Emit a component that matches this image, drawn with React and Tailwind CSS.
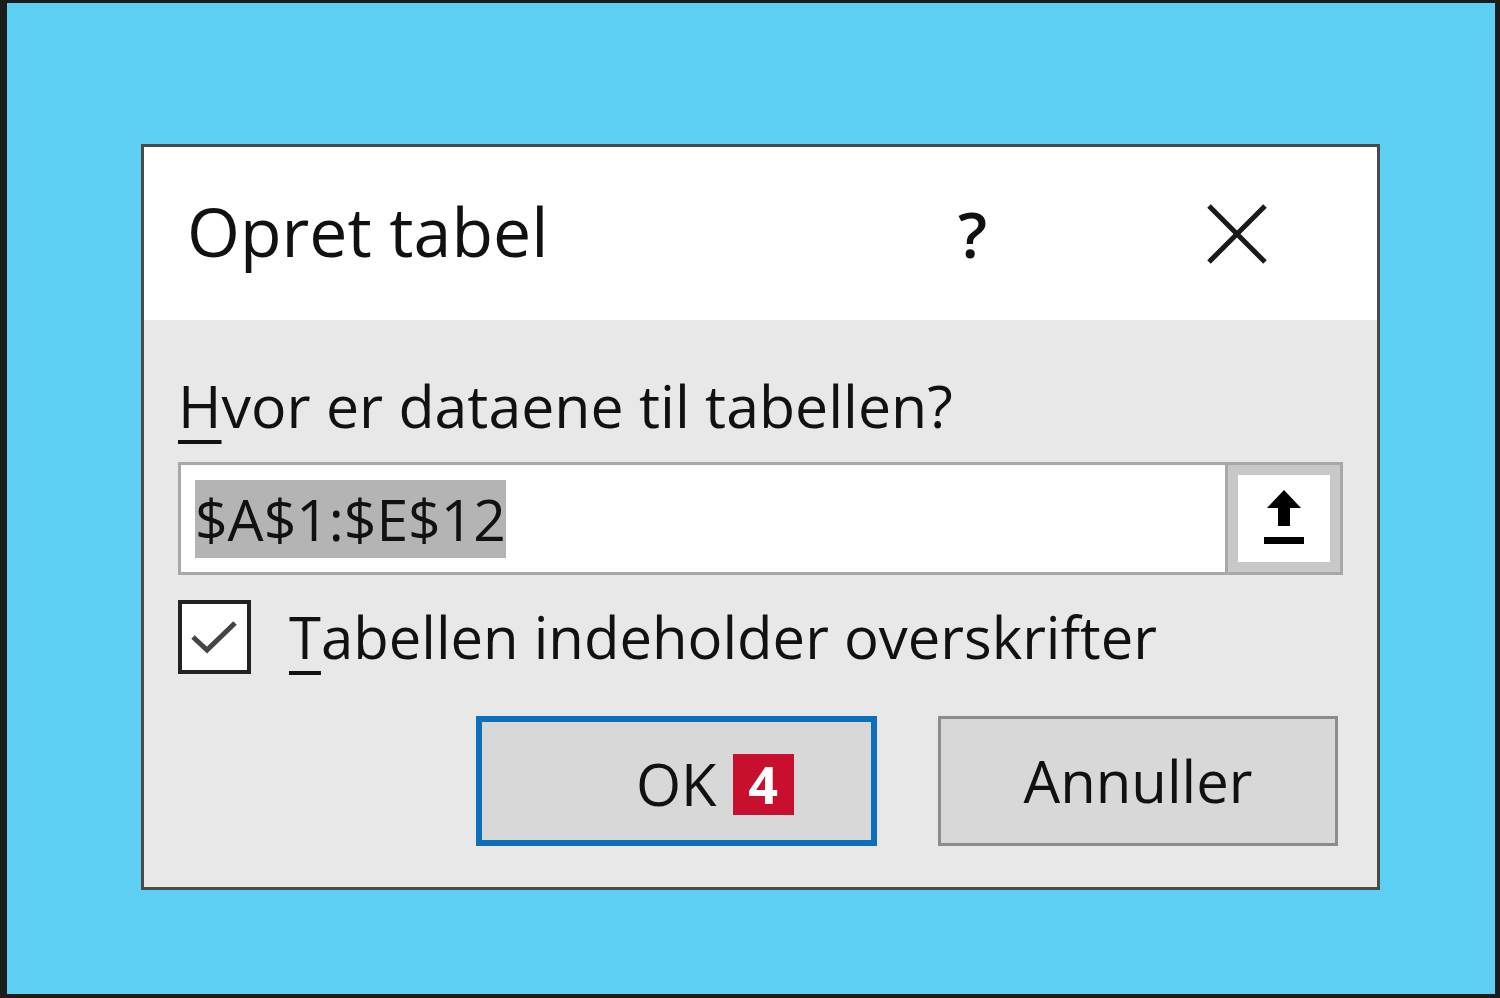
function UploadIcon() {
  return (
    <svg width="46" height="62" viewBox="0 0 46 62">
      <path d="M23 2 L40 20 L29 20 L29 38 L17 38 L17 20 L6 20 Z" fill="#000" />
      <rect x="3" y="49" width="40" height="7" fill="#000" />
    </svg>
  );
}

function CheckIcon() {
  return (
    <svg width="52" height="40" viewBox="0 0 52 40">
      <path d="M4 20 L18 33 L46 6" stroke="#444" strokeWidth="5" fill="none" />
    </svg>
  );
}

export default function App() {
  return (
    <div
      className="w-[1500px] h-[998px] bg-[#5dcff2] border-l-[7px] border-t-[3px] border-r-[5px] border-b-[4px] border-[#1c1c1c] pl-[134px] pt-[141px]"
      style={{ fontFamily: '"Open Sans", "Noto Sans", sans-serif' }}
    >
      {/* DIALOG */}
      <div className="w-[1239px] h-[746px] border-[3px] border-[#4a4a4a] bg-[#e8e8e8] flex flex-col">
        {/* TITLE BAR */}
        <div className="h-[173px] bg-white flex items-center pl-[43px] pr-[110px] text-[#111]">
          <span className="text-[68px] leading-none pb-[6px]">Opret tabel</span>
          <span className="ml-auto text-[64px] font-semibold leading-none">?</span>
          <svg className="ml-[220px]" width="60" height="60" viewBox="0 0 60 60">
            <path d="M2 2 L58 58 M58 2 L2 58" stroke="#1a1a1a" strokeWidth="5" />
          </svg>
        </div>

        {/* BODY */}
        <div className="flex flex-col pl-[34px] pr-[34px] pt-[56px]">
          <p className="text-[59px] leading-none text-[#111]">
            <span className="underline decoration-[4px] underline-offset-[12px]">H</span>vor er dataene til tabellen?
          </p>

          {/* INPUT */}
          <div className="mt-[27px] h-[113px] flex border-[3px] border-[#a8a8a8] bg-white">
            <div className="flex-1 flex items-center pl-[14px]">
              <span className="bg-[#b4b4b4] text-[#111] text-[57px] leading-[78px] h-[78px]">$A$1:$E$12</span>
            </div>
            <div className="w-[115px] h-full border-l-[3px] border-[#a8a8a8] bg-[#c8c8c8] p-[10px]">
              <div className="w-full h-full bg-white flex items-center justify-center">
                <UploadIcon />
              </div>
            </div>
          </div>

          {/* CHECKBOX */}
          <div className="mt-[25px] flex items-center">
            <div className="w-[73px] h-[74px] border-[4px] border-[#222] bg-white flex items-center justify-center">
              <CheckIcon />
            </div>
            <span className="ml-[38px] text-[58px] leading-none text-[#111]">
              <span className="underline decoration-[4px] underline-offset-[12px]">T</span>abellen indeholder overskrifter
            </span>
          </div>

          {/* BUTTONS */}
          <div className="mt-[42px] flex justify-end gap-[61px] pr-[5px]">
            <button className="w-[401px] h-[130px] border-[6px] border-[#0b6fba] bg-[#d8d8d8] flex items-center pl-[154px] pt-[6px]">
              <span className="text-[58px] leading-none text-[#111]">OK</span>
              <span className="ml-[16px] w-[61px] h-[61px] bg-[#c8102e] text-white font-bold text-[52px] leading-none flex items-center justify-center">4</span>
            </button>
            <button className="w-[400px] h-[130px] border-[3px] border-[#8c8c8c] bg-[#d8d8d8] flex items-center justify-center">
              <span className="text-[58px] leading-none text-[#111]">Annuller</span>
            </button>
          </div>
        </div>
      </div>
    </div>
  );
}
